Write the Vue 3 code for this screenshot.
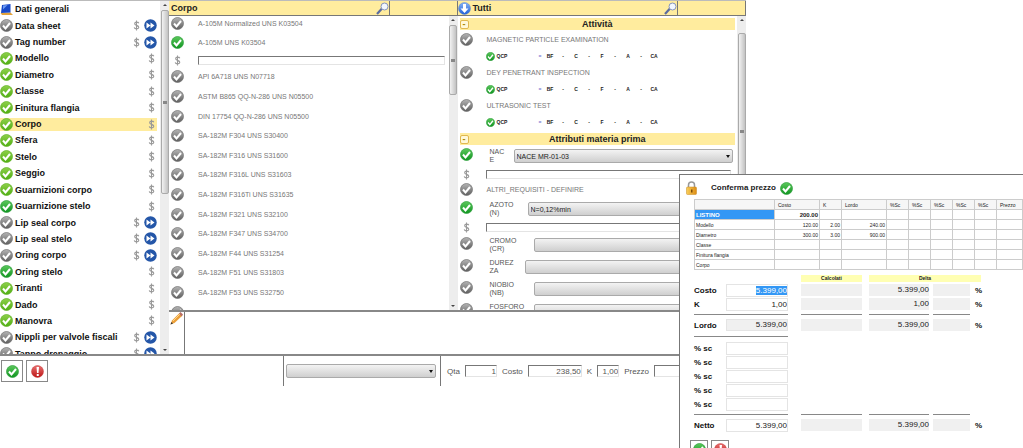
<script setup>
import { onMounted, ref } from 'vue'

const sections = [
  { name: 'Data sheet', state: 'grey', skip: true },
  { name: 'Tag number', state: 'grey', skip: true },
  { name: 'Modello', state: 'lime' },
  { name: 'Diametro', state: 'lime' },
  { name: 'Classe', state: 'lime' },
  { name: 'Finitura flangia', state: 'lime' },
  { name: 'Corpo', state: 'lime', current: true },
  { name: 'Sfera', state: 'lime' },
  { name: 'Stelo', state: 'lime' },
  { name: 'Seggio', state: 'lime' },
  { name: 'Guarnizioni corpo', state: 'lime' },
  { name: 'Guarnizione stelo', state: 'green' },
  { name: 'Lip seal corpo', state: 'grey', skip: true },
  { name: 'Lip seal stelo', state: 'grey', skip: true },
  { name: 'Oring corpo', state: 'grey', skip: true },
  { name: 'Oring stelo', state: 'green' },
  { name: 'Tiranti', state: 'lime' },
  { name: 'Dado', state: 'lime' },
  { name: 'Manovra', state: 'lime' },
  { name: 'Nippli per valvole fiscali', state: 'grey', skip: true },
  { name: 'Tappo drenaggio', state: 'grey', skip: true }
]

const materials = [
  'API 6A718 UNS N07718',
  'ASTM B865 QQ-N-286 UNS N05500',
  'DIN 17754 QQ-N-286 UNS N05500',
  'SA-182M F304 UNS S30400',
  'SA-182M F316 UNS S31600',
  'SA-182M F316L UNS S31603',
  'SA-182M F316Ti UNS S31635',
  'SA-182M F321 UNS S32100',
  'SA-182M F347 UNS S34700',
  'SA-182M F44 UNS S31254',
  'SA-182M F51 UNS S31803',
  'SA-182M F53 UNS S32750',
  'SA-182M F55 UNS S32760'
]

const activities = ['MAGNETIC PARTICLE EXAMINATION', 'DEY PENETRANT INSPECTION', 'ULTRASONIC TEST']
const marks = ['=', 'BF', '-', 'C', '-', 'F', '-', 'A', '-', 'CA']

const elements = [
  { name: 'CROMO (CR)', width: 44 },
  { name: 'DUREZZA', width: 35 },
  { name: 'NIOBIO (NB)', width: 44 },
  { name: 'FOSFORO (P)', width: 44 }
]

const priceHead = ['', 'Costo', 'K', 'Lordo', '%Sc', '%Sc', '%Sc', '%Sc', '%Sc', 'Prezzo']
const priceRows = [
  ['LISTINO', '200.00', '', ''],
  ['Modello', '120.00', '2.00', '240.00'],
  ['Diametro', '300.00', '3.00', '900.00'],
  ['Classe', '', '', ''],
  ['Finitura flangia', '', '', ''],
  ['Corpo', '', '', ''],
  ['', '', '', '']
]

const cost = ref(null)
onMounted(() => {
  cost.value.focus()
  cost.value.select()
})
</script>

<template>
  <main class="page">
    <svg class="defs" aria-hidden="true">
      <defs>
        <linearGradient id="g-grey" x1="0" y1="0" x2="0" y2="1">
          <stop offset="0" stop-color="#b4b4b4" /><stop offset="1" stop-color="#5e5e5e" />
        </linearGradient>
        <linearGradient id="g-lime" x1="0" y1="0" x2="0" y2="1">
          <stop offset="0" stop-color="#8ed04a" /><stop offset="1" stop-color="#4fae12" />
        </linearGradient>
        <linearGradient id="g-green" x1="0" y1="0" x2="0" y2="1">
          <stop offset="0" stop-color="#5cc85c" /><stop offset="1" stop-color="#0f9420" />
        </linearGradient>
        <linearGradient id="g-blue" x1="0" y1="0" x2="0" y2="1">
          <stop offset="0" stop-color="#86b4f4" /><stop offset="1" stop-color="#1f5fd8" />
        </linearGradient>
        <linearGradient id="g-red" x1="0" y1="0" x2="0" y2="1">
          <stop offset="0" stop-color="#e87070" /><stop offset="1" stop-color="#bd1515" />
        </linearGradient>
        <linearGradient id="g-gold" x1="0" y1="0" x2="1" y2="0">
          <stop offset="0" stop-color="#f9cf5a" /><stop offset="1" stop-color="#dd8c13" />
        </linearGradient>
      </defs>
      <symbol id="i-grey" viewBox="0 0 26 26">
        <circle cx="13" cy="13" r="12" fill="url(#g-grey)" stroke="#777" stroke-width="1.5" />
        <path d="M6 13l5 6 9-11" fill="none" stroke="#fff" stroke-width="4" />
      </symbol>
      <symbol id="i-lime" viewBox="0 0 26 26">
        <circle cx="13" cy="13" r="12" fill="url(#g-lime)" stroke="#65b52c" stroke-width="1.5" />
        <path d="M6 13l5 6 9-11" fill="none" stroke="#fff" stroke-width="4" />
      </symbol>
      <symbol id="i-green" viewBox="0 0 26 26">
        <circle cx="13" cy="13" r="12" fill="url(#g-green)" stroke="#35a443" stroke-width="1.5" />
        <path d="M6 13l5 6 9-11" fill="none" stroke="#fff" stroke-width="4" />
      </symbol>
      <symbol id="i-skip" viewBox="0 0 26 26">
        <circle cx="13" cy="13" r="12.5" fill="#2456a8" />
        <path d="M5 7l8 6-8 6zM13 7l8 6-8 6z" fill="#fff" />
      </symbol>
      <symbol id="i-dollar" viewBox="0 0 14 24">
        <path d="M12 7C11 4 3 3.500 3 8c0 4.500 9 3 9 8 0 4.500-9 4.500-10 0M7 1v22" fill="none" stroke="#999" stroke-width="2.400" />
      </symbol>
      <symbol id="i-alert" viewBox="0 0 26 26">
        <circle cx="13" cy="13" r="12" fill="url(#g-red)" stroke="#c63a3a" />
        <path d="M11 4h5l-1 12h-3zM11.500 18h4v4h-4z" fill="#fff" />
      </symbol>
      <symbol id="i-search" viewBox="0 0 26 26">
        <path d="M2 24l10-11" stroke="#5b6ca0" stroke-width="4.500" />
        <circle cx="17" cy="9" r="7" fill="#f2f7ff" stroke="#8795bd" stroke-width="2" />
      </symbol>
    </svg>

    <section class="window">
      <div class="panes">
        <nav class="sidebar">
          <ul class="sections">
            <li>
              <svg class="ico" viewBox="0 0 26 26" aria-hidden="true">
                <path d="M1 20l20-1 5 5H4z" fill="#e2a23c" />
                <path d="M4 4l17-2v17L2 20z" fill="#1849c8" />
                <path d="M6 5l9-1-9 9z" fill="#6d9cf4" />
              </svg>
              <a href="#generali">Dati generali</a>
            </li>
            <li v-for="s in sections" :key="s.name" :class="{ current: s.current }">
              <svg class="ico" aria-hidden="true"><use :href="'#i-' + s.state" /></svg>
              <a href="#sezione">{{ s.name }}</a>
              <svg class="dollar" aria-hidden="true"><use href="#i-dollar" /></svg>
              <svg v-if="s.skip" class="ico" aria-hidden="true"><use href="#i-skip" /></svg>
            </li>
          </ul>
          <div class="bar bar-side"><i></i><b></b><i class="down"></i></div>
        </nav>

        <div class="work">
          <div class="lists">
            <section class="col">
              <header class="title">
                <h2>Corpo</h2>
                <svg class="ico" aria-hidden="true"><use href="#i-search" /></svg>
                <input class="find" aria-label="Cerca corpo" />
              </header>
              <div class="body">
                <div class="scroll">
                  <div class="item first"><svg class="ico" aria-hidden="true"><use href="#i-grey" /></svg><span>A-105M Normalized UNS K03504</span></div>
                  <div class="item chosen"><svg class="ico" aria-hidden="true"><use href="#i-green" /></svg><span>A-105M UNS K03504</span></div>
                  <div class="price">
                    <svg class="dollar" aria-hidden="true"><use href="#i-dollar" /></svg>
                    <input class="sunk" aria-label="Prezzo A-105M" />
                  </div>
                  <div class="materials">
                    <div v-for="m in materials" :key="m" class="item">
                      <svg class="ico" aria-hidden="true"><use href="#i-grey" /></svg><span>{{ m }}</span>
                    </div>
                  </div>
                </div>
                <div class="bar bar-mid"><i></i><b></b><i class="down"></i></div>
              </div>
            </section>

            <section class="col">
              <header class="title">
                <svg class="ico" viewBox="0 0 26 26" aria-hidden="true">
                  <circle cx="13" cy="13" r="12" fill="url(#g-blue)" stroke="#5f87cc" />
                  <path d="M10 4h6v9h5l-8 9-8-9h5z" fill="#fff" />
                </svg>
                <h2>Tutti</h2>
                <svg class="ico" aria-hidden="true"><use href="#i-search" /></svg>
                <input class="find" aria-label="Cerca tutti" />
              </header>
              <div class="body">
                <div class="scroll attributes">
                  <h3><button class="fold" aria-label="Comprimi attività">-</button>Attività</h3>
                  <template v-for="a in activities" :key="a">
                    <div class="item act"><svg class="ico" aria-hidden="true"><use href="#i-grey" /></svg><span>{{ a }}</span></div>
                    <div class="qcp">
                      <svg class="small" aria-hidden="true"><use href="#i-green" /></svg>
                      <strong>QCP</strong>
                      <span v-for="(m, n) in marks" :key="n" :class="{ link: n === 0 }">{{ m }}</span>
                    </div>
                  </template>
                  <h3 class="second"><button class="fold" aria-label="Comprimi attributi">-</button>Attributi materia prima</h3>
                  <div class="attr">
                    <svg class="ico" aria-hidden="true"><use href="#i-green" /></svg>
                    <label for="nace" :style="{ width: '24px' }">NACE</label>
                    <span class="drop"><select id="nace"><option>NACE MR-01-03</option></select></span>
                  </div>
                  <div class="price">
                    <svg class="dollar" aria-hidden="true"><use href="#i-dollar" /></svg>
                    <input class="sunk" aria-label="Prezzo NACE" />
                  </div>
                  <div class="item other"><svg class="ico" aria-hidden="true"><use href="#i-grey" /></svg><span>ALTRI_REQUISITI - DEFINIRE</span></div>
                  <div class="attr">
                    <svg class="ico" aria-hidden="true"><use href="#i-green" /></svg>
                    <label for="azoto" :style="{ width: '38px' }">AZOTO (N)</label>
                    <span class="drop"><select id="azoto"><option>N=0,12%min</option></select></span>
                  </div>
                  <div class="price">
                    <svg class="dollar" aria-hidden="true"><use href="#i-dollar" /></svg>
                    <input class="sunk" aria-label="Prezzo azoto" />
                  </div>
                  <div v-for="(e, n) in elements" :key="e.name" class="attr">
                    <svg class="ico" aria-hidden="true"><use href="#i-grey" /></svg>
                    <label :for="'el' + n" :style="{ width: e.width + 'px' }">{{ e.name }}</label>
                    <span class="drop"><select :id="'el' + n"><option></option></select></span>
                  </div>
                </div>
                <div class="bar bar-right"><i></i><b></b><i class="down"></i></div>
              </div>
            </section>
          </div>

          <div class="notes">
            <svg class="ico" viewBox="0 0 26 26" aria-hidden="true">
              <path d="M1 25l3-8L19 2l6 5L9 22z" fill="#eb9f38" />
              <path d="M6 18L20 4" stroke="#ffd68a" stroke-width="2" />
              <path d="M18 3l3-3 5 5-3 4z" fill="#b76e66" />
              <path d="M1 25l2-5 3 3z" fill="#333" />
            </svg>
            <textarea aria-label="Note"></textarea>
          </div>
        </div>
      </div>

      <footer class="footer">
        <div class="actions">
          <button aria-label="Conferma"><svg class="ico" aria-hidden="true"><use href="#i-green" /></svg></button>
          <button aria-label="Annulla"><svg class="ico" aria-hidden="true"><use href="#i-alert" /></svg></button>
        </div>
        <div class="choice"><span class="drop"><select aria-label="Selezione"><option></option></select></span></div>
        <div class="totals">
          <label for="qta">Qta</label><input id="qta" class="sunk w-qta" value="1" />
          <label for="costo">Costo</label><input id="costo" class="sunk w-costo" value="238,50" />
          <label for="k">K</label><input id="k" class="sunk w-k" value="1,00" />
          <label for="prezzo">Prezzo</label><input id="prezzo" class="sunk w-prezzo" />
        </div>
      </footer>
    </section>

    <section class="dialog">
      <header class="dialog-title">
        <svg class="lock" viewBox="0 0 22 28" aria-hidden="true">
          <path d="M5 14V8c0-8 12-8 12 0v6" fill="none" stroke="#999" stroke-width="3" />
          <rect x="1" y="12" width="20" height="15" rx="2" fill="url(#g-gold)" stroke="#c98a20" />
          <path d="M10 17h3v6h-3z" fill="#7a4a08" />
        </svg>
        <h2>Conferma prezzo</h2>
        <svg class="ico" aria-hidden="true"><use href="#i-green" /></svg>
      </header>
      <div class="table-wrap">
        <table>
          <colgroup>
            <col class="c-name" /><col class="c-wide" /><col class="c-k" /><col class="c-wide" />
            <col v-for="n in 5" :key="n" class="c-k" /><col />
          </colgroup>
          <thead><tr><th v-for="(h, n) in priceHead" :key="n">{{ h }}</th></tr></thead>
          <tbody>
            <tr v-for="(r, n) in priceRows" :key="n" :class="{ main: n === 0 }">
              <td v-for="(c, i) in r" :key="i">{{ c }}</td>
              <td v-for="i in 6" :key="'e' + i"></td>
            </tr>
          </tbody>
        </table>
      </div>

      <form class="form">
        <div class="row heads"><span class="calc">Calcolati</span><span class="delta">Delta</span></div>
        <div class="row">
          <label for="d-costo">Costo</label><input id="d-costo" ref="cost" class="own" value="5.399,00" />
          <output class="calc"></output><output class="diff">5.399,00</output><output class="pct"></output><b>%</b>
        </div>
        <div class="row">
          <label for="d-k">K</label><input id="d-k" class="own" value="1,00" />
          <output class="calc"></output><output class="diff">1,00</output><output class="pct"></output><b>%</b>
        </div>
        <div class="row rule"><i class="own"></i><i class="calc"></i><i class="diff"></i><i class="pct"></i></div>
        <div class="row">
          <label for="d-lordo">Lordo</label><input id="d-lordo" class="own filled" value="5.399,00" readonly />
          <output class="calc"></output><output class="diff">5.399,00</output><output class="pct"></output><b>%</b>
        </div>
        <div class="row rule after"><i class="own"></i></div>
        <div v-for="n in 5" :key="n" class="row">
          <label :for="'sc' + n">% sc</label><input :id="'sc' + n" class="own" />
        </div>
        <div class="row rule"><i class="own"></i><i class="calc"></i><i class="diff"></i><i class="pct"></i></div>
        <div class="row">
          <label for="d-netto">Netto</label><input id="d-netto" class="own" value="5.399,00" />
          <output class="calc"></output><output class="diff">5.399,00</output><output class="pct"></output><b>%</b>
        </div>
      </form>
      <div class="actions dialog-actions">
        <button aria-label="Conferma prezzo"><svg class="ico" aria-hidden="true"><use href="#i-green" /></svg></button>
        <button aria-label="Annulla prezzo"><svg class="ico" aria-hidden="true"><use href="#i-alert" /></svg></button>
      </div>
    </section>
  </main>
</template>

<style>
body {
  margin: 0;
  background: #fff;
}
</style>

<style scoped>
* {
  box-sizing: border-box;
}
.page {
  position: relative;
  height: 100vh;
  overflow: hidden;
  background: #fff;
  color: #222;
  font: 7px/9px "Liberation Sans", Arial, sans-serif;
}
.defs {
  position: absolute;
  width: 0;
  height: 0;
}
h2,
h3,
ul {
  margin: 0;
  padding: 0;
}
h2,
h3 {
  font-size: 9px;
  line-height: 12px;
  color: #222;
}
input,
select,
textarea,
button {
  min-width: 0;
  margin: 0;
  padding: 0;
  border: 0;
  border-radius: 0;
  outline: none;
  background: #fff;
  color: inherit;
  font: inherit;
}
.ico {
  flex: none;
  width: 13px;
  height: 13px;
}
.dollar {
  flex: none;
  width: 7px;
  height: 11px;
}
.window {
  display: flex;
  flex-direction: column;
  width: calc(100% - 277px);
  height: calc(100vh - 62px);
}
.panes {
  flex: 1;
  min-height: 0;
  display: flex;
  border-top: 1px solid #bbb;
  border-bottom: 2px solid #888;
}
.sidebar {
  flex: none;
  display: flex;
  width: 169px;
  overflow: hidden;
}
.sections {
  flex: 1;
  display: grid;
  grid-auto-rows: 1fr;
  height: 361px;
  list-style: none;
}
.sections li {
  display: flex;
  align-items: center;
  gap: 2px;
  margin-right: 3px;
  font-size: 9px;
  font-weight: bold;
}
.sections li .dollar {
  margin: 0 2px;
}
.sections a {
  flex: 1;
  color: #111;
  text-decoration: none;
  line-height: 12px;
  white-space: nowrap;
}
.current {
  background: linear-gradient(#ffec9e, #ffec9e) center / 100% 13px no-repeat;
}
.bar {
  flex: none;
  display: flex;
  flex-direction: column;
  align-items: center;
  width: 9px;
  padding: 3px 0;
  background: #ededed;
}
.bar i {
  border: 2px solid transparent;
  border-top-width: 0;
  border-bottom-color: #444;
}
.bar i.down {
  margin-top: auto;
  border-width: 2px 2px 0;
  border-top-color: #444;
}
.bar b {
  width: 8px;
  margin-top: 4px;
  border: 1px solid #aaa;
  border-radius: 2px;
  background:
    linear-gradient(#888, #888) center / 4px 3px no-repeat,
    linear-gradient(90deg, #f2f2f2, #c2c2c2);
}
.bar-side b {
  height: 184px;
}
.bar-mid b {
  height: 70px;
}
.bar-right b {
  height: 196px;
  margin-top: 12px;
}
.work {
  flex: 1;
  min-width: 0;
  display: flex;
  flex-direction: column;
}
.lists {
  flex: 1;
  min-height: 0;
  display: grid;
  grid-template-columns: 1fr 1fr;
  overflow: hidden;
}
.col {
  display: flex;
  flex-direction: column;
  min-width: 0;
  min-height: 0;
}
.title {
  flex: none;
  display: flex;
  align-items: center;
  height: 15px;
  border-right: 1px solid #777;
  border-bottom: 1px solid #777;
  background: #ffec9e;
}
.title h2 {
  flex: 1;
  padding-left: 2px;
}
.find {
  align-self: stretch;
  width: 68px;
  border-left: 1px solid #777;
  background: #ffec9e;
}
.body {
  flex: 1;
  min-height: 0;
  display: flex;
  overflow: hidden;
}
.scroll {
  flex: 1;
  min-width: 0;
  padding-left: 2px;
}
.item {
  display: flex;
  align-items: center;
  gap: 14px;
  height: 20px;
  color: #777;
  white-space: nowrap;
}
.item.first {
  height: 15px;
}
.item.chosen {
  height: 23px;
}
.price {
  display: flex;
  align-items: center;
  gap: 17px;
  height: 13px;
  margin-right: 4px;
  padding-left: 3px;
}
.sunk {
  border: 1px solid #e4e4e4;
  border-top-color: #777;
  border-left-color: #777;
}
.price .sunk {
  flex: 1;
  height: 9px;
}
.materials {
  display: grid;
  grid-auto-rows: 1fr;
  height: 255px;
}
.materials .item {
  height: auto;
}
.attributes {
  padding: 2px 2px 0 2px;
}
.attributes h3 {
  display: flex;
  align-items: center;
  justify-content: center;
  background: #ffec9e;
}
.attributes h3.second {
  margin-top: 4px;
}
.fold {
  width: 9px;
  height: 9px;
  margin-right: auto;
  border: 1px solid #e0b850;
  border-radius: 2px;
  background: #fff8d8;
  color: #a80;
  line-height: 6px;
}
.attributes h3::after {
  content: "";
  width: 9px;
  margin-left: auto;
}
.act {
  height: 19px;
}
.qcp {
  display: grid;
  grid-template-columns: 11px 40px 7px repeat(9, 13px);
  align-items: center;
  height: 14px;
  padding-left: 26px;
  font-size: 5px;
  font-weight: bold;
  text-align: center;
}
.qcp strong {
  text-align: left;
}
.qcp .link {
  color: #66c;
}
.small {
  width: 9px;
  height: 9px;
}
.attr {
  display: flex;
  align-items: center;
  height: 22px;
  padding-right: 2px;
}
.attr .ico {
  margin-bottom: 4px;
}
.attr label {
  flex: none;
  margin-left: 17px;
  padding-right: 7px;
  color: #555;
  line-height: 8px;
  overflow-wrap: anywhere;
}
.attributes .price {
  height: 14px;
  gap: 16px;
}
.drop {
  position: relative;
  flex: 1;
  min-width: 0;
  display: flex;
}
.drop::after {
  content: "";
  position: absolute;
  top: 6px;
  right: 3px;
  border: 2px solid transparent;
  border-top: 3px solid #111;
  border-bottom: 0;
  pointer-events: none;
}
.drop select {
  flex: 1;
  height: 14px;
  padding-left: 2px;
  border: 1px solid #aaa;
  border-radius: 2px;
  background: linear-gradient(#f3f3f3, #cfcfcf);
  color: #222;
  appearance: none;
}
.other {
  height: 17px;
}
.notes {
  flex: none;
  display: flex;
  height: 44px;
  border-top: 2px solid #888;
}
.notes .ico {
  margin: 0 1px;
}
.notes textarea {
  flex: 1;
  border-left: 1px solid #777;
  resize: none;
}
.footer {
  flex: none;
  display: flex;
  height: 30px;
  font-size: 8px;
}
.actions {
  flex: none;
  display: flex;
  gap: 3px;
  width: 283px;
  padding: 4px 1px;
}
.actions button {
  display: grid;
  place-items: center;
  width: 22px;
  height: 22px;
  border: 1px solid #888;
}
.choice {
  flex: none;
  display: flex;
  align-items: center;
  width: 158px;
  padding: 0 4px 0 2px;
  border: 0 solid #777;
  border-width: 0 1px;
}
.totals {
  flex: 1;
  min-width: 0;
  display: flex;
  align-items: center;
  gap: 5px;
  padding-left: 6px;
  color: #555;
}
.totals input {
  flex: none;
  height: 12px;
  text-align: right;
}
.w-qta {
  width: 32px;
}
.w-costo {
  width: 54px;
}
.w-k {
  width: 22px;
}
.w-prezzo {
  width: 80px;
}
.dialog {
  position: absolute;
  top: 174px;
  right: 0;
  width: 344px;
  padding: 6px 0 0 14px;
  border: 1px solid #777;
  border-right: 0;
  border-bottom: 0;
  background: #fff;
}
.dialog-title {
  display: flex;
  align-items: center;
  height: 14px;
  margin-left: -8px;
}
.dialog-title h2 {
  margin: 0 4px 0 14px;
  font-size: 8px;
}
.lock {
  width: 11px;
  height: 14px;
}
.table-wrap {
  height: 71px;
  margin-top: 4px;
  overflow: hidden;
}
table {
  width: 100%;
  table-layout: fixed;
  border-collapse: collapse;
  font-size: 5px;
  line-height: 6px;
}
.c-name {
  width: 80px;
}
.c-wide {
  width: 45px;
}
.c-k {
  width: 22px;
}
th,
td {
  height: 10px;
  padding: 0 1px;
  border: 1px solid #ccc;
  text-align: right;
  white-space: nowrap;
}
th {
  padding-left: 3px;
  background: #f6f6f6;
  font-weight: normal;
  text-align: left;
}
td:first-child {
  text-align: left;
}
.main td {
  font-size: 6px;
  font-weight: bold;
}
.main td:first-child {
  background: #3397f5;
  color: #fff;
}
.form {
  margin-top: 4px;
  font-size: 8px;
}
.row {
  display: grid;
  grid-template-columns: 32fr 62fr 13fr 61fr 7fr 60fr 4fr 37fr 5fr 48fr;
  align-items: center;
  height: 14px;
}
.row label,
.row b {
  color: #111;
  font-weight: bold;
  font-size: 8px;
}
.row > * {
  grid-row: 1;
  min-width: 0;
}
.row label {
  grid-column: 1;
}
.row .own {
  grid-column: 2;
}
.row .calc {
  grid-column: 4;
}
.row .diff {
  grid-column: 6;
}
.row .pct {
  grid-column: 8;
}
.row b {
  grid-column: 10;
}
.row input {
  height: 13px;
  border: 1px solid #e4e4e4;
  text-align: right;
}
.row .filled,
.row output {
  height: 12px;
  background: #f0f0f0;
  line-height: 12px;
  text-align: right;
}
.row input::selection {
  background: #3397f5;
  color: #fff;
}
.heads {
  height: 8px;
  margin-bottom: 1px;
  font-size: 5px;
  font-weight: bold;
  line-height: 7px;
  text-align: center;
}
.heads span {
  background: #ffffb3;
}
.row.heads .delta {
  grid-column: 6 / 11;
  margin-right: 42px;
}
.rule {
  height: 7px;
}
.rule i {
  height: 1px;
  background: #888;
}
.row.rule .own {
  grid-column: 1 / 3;
}
.rule.after {
  height: 9px;
}
.dialog-actions {
  margin-left: -4px;
  padding: 8px 0;
}
.dialog-actions button {
  width: 18px;
  height: 18px;
}
</style>
